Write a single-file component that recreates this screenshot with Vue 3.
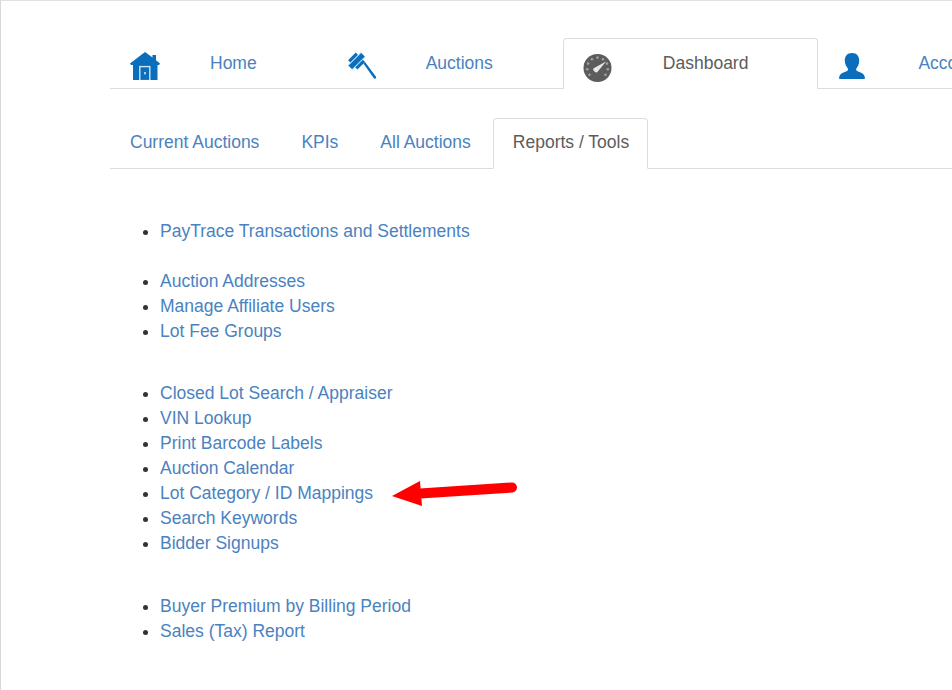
<script setup>
const mainTabs = [
  { label: "Home", icon: "home" },
  { label: "Auctions", icon: "gavel" },
  { label: "Dashboard", icon: "gauge", active: true },
  { label: "Account", icon: "user" },
];

const subTabs = [
  { label: "Current Auctions" },
  { label: "KPIs" },
  { label: "All Auctions" },
  { label: "Reports / Tools", active: true },
];

const groups = [
  { gap: "wide", links: ["PayTrace Transactions and Settlements"] },
  { gap: "wider", links: ["Auction Addresses", "Manage Affiliate Users", "Lot Fee Groups"] },
  {
    gap: "wider",
    links: [
      "Closed Lot Search / Appraiser",
      "VIN Lookup",
      "Print Barcode Labels",
      "Auction Calendar",
      "Lot Category / ID Mappings",
      "Search Keywords",
      "Bidder Signups",
    ],
  },
  { gap: "wider", links: ["Buyer Premium by Billing Period", "Sales (Tax) Report"] },
];

// tick dots round the gauge, leaving the bottom open
const gaugeTicks = [-130, -97, -65, -32, 0, 32, 65, 97, 130].map((deg) => {
  const rad = (deg * Math.PI) / 180;
  return { x: 14.5 + 10.4 * Math.sin(rad), y: 14 - 10.4 * Math.cos(rad) };
});
</script>

<template>
  <div class="page">
    <ul class="tabs main-tabs">
      <li v-for="tab in mainTabs" :key="tab.label" :class="{ active: tab.active }">
        <a href="#">
          <span class="tab-icon" :class="tab.icon">
            <svg v-if="tab.icon === 'home'" width="30" height="28" viewBox="0 0 30 28">
              <path fill="#0a6ebd" d="M15 0 L22.5 5.6 L22.5 3 L26 3 L26 8.2 L30 11.5 L29 13 L27.5 13 L27.5 28 L3 28 L3 13 L1 13 L0 11.5 Z" />
              <rect x="9.8" y="14.6" width="10" height="14" fill="#0a6ebd" stroke="#cfe4f5" stroke-width="1.4" />
              <rect x="14.2" y="20" width="1.6" height="2.4" fill="#cfe4f5" />
            </svg>
            <svg v-else-if="tab.icon === 'gavel'" width="28" height="28" viewBox="0 0 28 28">
              <g fill="#0a6ebd">
                <path transform="translate(9 9.5) rotate(-45) scale(1.2)" d="M-4.5 -6 L4.5 -6 L4.5 -3 L7.5 -3 L7.5 2 L4.5 2 L4.5 5 L-4.5 5 L-4.5 2 L-7.5 2 L-7.5 -3 L-4.5 -3 Z" />
                <path d="M15.4 11.5 L17 10 L28 24.8 C28.4 26.2 27.2 27.4 26 26.6 Z" />
              </g>
              <g transform="translate(9 9.5) rotate(-45) scale(1.2)" stroke="#cfe4f5" stroke-width="0.8">
                <path d="M-7.5 -3 L7.5 -3" />
                <path d="M-7.5 2 L7.5 2" />
              </g>
            </svg>
            <svg v-else-if="tab.icon === 'gauge'" width="29" height="28" viewBox="0 0 29 28">
              <circle cx="14.5" cy="14" r="14" fill="#5c5c5c" />
              <circle v-for="(tick, i) in gaugeTicks" :key="i" :cx="tick.x" :cy="tick.y" r="1.3" fill="#a0a0a0" />
              <path fill="#e8e8e8" d="M10.3 14.6 L23 7.6 L14.2 18.2 C12.6 19.2 9.6 16.6 10.3 14.6 Z" />
            </svg>
            <svg v-else width="27" height="26" viewBox="0 0 27 26">
              <path fill="#0a6ebd" d="M13 0 C18 0 20.2 3.4 20.2 7.6 C20.2 11 19 13.6 17.4 15.4 C16.8 16.6 17.2 17.6 18.6 18.2 C22 19.4 25 20.4 25.8 24 L25.8 26 L0.2 26 L0.2 24 C1 20.4 4.2 19.4 7.6 18.2 C9 17.6 9.4 16.6 8.8 15.4 C7.2 13.6 5.8 11 5.8 7.6 C5.8 3.4 8 0 13 0 Z" />
            </svg>
          </span>
          <span>{{ tab.label }}</span>
        </a>
      </li>
    </ul>

    <ul class="tabs sub-tabs">
      <li v-for="tab in subTabs" :key="tab.label" :class="{ active: tab.active }">
        <a href="#">{{ tab.label }}</a>
      </li>
    </ul>

    <div class="reports">
      <ul v-for="(group, i) in groups" :key="i" class="link-list" :class="group.gap">
        <li v-for="link in group.links" :key="link"><a href="#">{{ link }}</a></li>
      </ul>
      <svg class="arrow" width="130" height="30" viewBox="0 0 130 30">
        <path d="M29 14.5 L121 8.5" stroke="#ff0000" stroke-width="10" stroke-linecap="round" fill="none" />
        <path d="M1 17 L29 2 L31 27 Z" fill="#ff0000" />
      </svg>
    </div>
  </div>
</template>

<style scoped>
.page {
  box-sizing: border-box;
  width: 952px;
  height: 690px;
  overflow: hidden;
  padding: 38px 0 0 109px;
  border-top: 1px solid #e2e2e2;
  border-left: 1px solid #d8d8d8;
  font-family: "Liberation Sans", Arial, sans-serif;
  font-size: 17.5px;
  line-height: 25px;
  color: #333;
}
a {
  color: #4a82c0;
  text-decoration: none;
}
.tabs {
  display: flex;
  margin: 0;
  padding: 0;
  list-style: none;
  border-bottom: 1px solid #ddd;
  white-space: nowrap;
}
.tabs li {
  margin-bottom: -1px;
  margin-right: 2px;
  flex: none;
}
.tabs a {
  display: block;
  box-sizing: border-box;
  height: 51px;
  padding: 11px 19px 13px;
  border: 1px solid transparent;
  border-radius: 4px 4px 0 0;
}
.tabs .active a {
  color: #5c5c5c;
  background: #fff;
  border-color: #ddd #ddd #fff;
}
.main-tabs {
  width: 1100px;
  margin-top: -1px;
}
.main-tabs li:first-child {
  margin-right: 1px;
}
.main-tabs li.active {
  margin-right: 0;
}
.main-tabs a {
  display: flex;
  align-items: center;
  padding-top: 12px;
  padding-bottom: 12px;
  padding-right: 67px;
}
.main-tabs .active a {
  padding-right: 69px;
}
.tab-icon {
  flex: none;
  display: flex;
  width: 80px;
  padding-top: 4px;
}
.tab-icon.gavel svg {
  margin-left: 2px;
}
.tab-icon.gauge {
  padding-top: 8px;
}
.tab-icon.user {
  padding-top: 5px;
}
.tab-icon.user svg {
  margin-left: 1px;
}
.sub-tabs {
  margin-top: 29px;
}
.sub-tabs .active {
  margin-right: 0;
}
.sub-tabs .active a {
  padding-right: 18px;
}
.reports {
  position: relative;
  padding-top: 50px;
}
.link-list {
  margin: 0;
  padding-left: 50px;
}
.link-list.wide {
  margin-bottom: 25px;
}
.link-list.wider {
  margin-bottom: 37.3px;
}
.arrow {
  position: absolute;
  left: 281px;
  top: 310px;
}
</style>

<style>
html, body {
  margin: 0;
  overflow: hidden;
  background: #fff;
}
</style>
